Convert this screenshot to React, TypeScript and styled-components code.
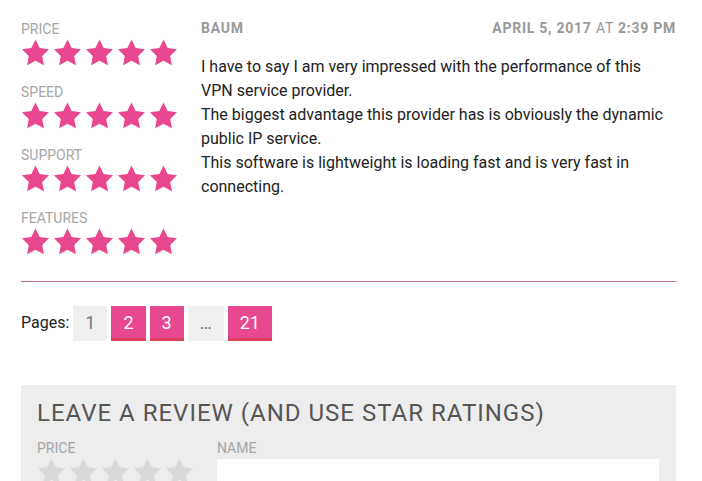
import React from "react";
import styled, { createGlobalStyle } from "styled-components";

const Global = createGlobalStyle`
  html, body { margin: 0; padding: 0; background: #fff; }
  body { font-family: Roboto, "Liberation Sans", Arial, sans-serif; color: #222; }
`;

const Page = styled.div`
  width: 655px;
  padding: 20px 0 0 21px;
`;

const Review = styled.div`
  display: flex;
`;

const RatingsCol = styled.div`
  width: 180px;
  flex: none;
  padding-top: 1px;
`;

const RatingBlock = styled.div`
  margin-bottom: 18px;
  &:last-child { margin-bottom: 0; }
`;

const Label = styled.div`
  font-size: 14px;
  line-height: 17px;
  color: #a6a6a6;
  text-transform: uppercase;
  margin-bottom: 1px;
`;

const Stars = styled.div`
  display: flex;
  gap: 5px;
  height: 27px;
  margin-left: 1px;
`;

const StarSvg = styled.svg<{ $color: string }>`
  width: 27px;
  height: 27px;
  display: block;
  fill: ${(p) => p.$color};
`;

const ContentCol = styled.div`
  flex: 1;
  min-width: 0;
`;

const Meta = styled.div`
  display: flex;
  justify-content: space-between;
  font-size: 14px;
  line-height: 17px;
  color: #999;
  text-transform: uppercase;
  letter-spacing: 0.75px;
`;

const Strong = styled.span`
  font-weight: 700;
`;

const Body = styled.div`
  margin-top: 18px;
  font-size: 16px;
  line-height: 24px;
  color: #222;
`;

const Rule = styled.hr`
  border: 0;
  height: 1px;
  background: #b8688d;
  margin: 26px 0 24px;
`;

const Pagination = styled.div`
  display: flex;
  align-items: center;
  gap: 4px;
  font-size: 16px;
`;

const PagesLabel = styled.span`
  color: #222;
  padding-bottom: 3px;
`;

const PageBox = styled.span<{ $active?: boolean }>`
  display: inline-flex;
  align-items: center;
  justify-content: center;
  height: 32px;
  padding: 0 12px;
  font-size: 18px;
  background: ${(p) => (p.$active ? "#e8488f" : "#efefef")};
  color: ${(p) => (p.$active ? "#fff" : "#777")};
  border-bottom: 3px solid ${(p) => (p.$active ? "#e0405c" : "#efefef")};
`;

const Form = styled.div`
  margin-top: 44px;
  background: #ededed;
  padding: 14px 17px 20px 16px;
`;

const FormTitle = styled.h2`
  margin: 0 0 13px;
  font-size: 24px;
  line-height: 28px;
  font-weight: 400;
  letter-spacing: 1px;
  color: #555;
  text-transform: uppercase;
`;

const FormRow = styled.div`
  display: flex;
`;

const FormRatings = styled.div`
  width: 180px;
  flex: none;
`;

const FormField = styled.div`
  flex: 1;
`;

const Input = styled.div`
  height: 40px;
  background: #fff;
  margin-top: 2px;
`;

const STAR = "M12 2l3.09 6.26L22 9.27l-5 4.87 1.18 6.88L12 17.77l-6.18 3.25L7 14.14 2 9.27l6.91-1.01L12 2z";

const StarRow = ({ color }: { color: string }) => (
  <Stars>
    {[0, 1, 2, 3, 4].map((i) => (
      <StarSvg key={i} $color={color} viewBox="2 1.6 20 20">
        <path d={STAR} />
      </StarSvg>
    ))}
  </Stars>
);

const categories = ["Price", "Speed", "Support", "Features"];

export default function App() {
  return (
    <>
      <Global />
      <Page>
        <Review>
          <RatingsCol>
            {categories.map((c) => (
              <RatingBlock key={c}>
                <Label>{c}</Label>
                <StarRow color="#e8488f" />
              </RatingBlock>
            ))}
          </RatingsCol>
          <ContentCol>
            <Meta>
              <Strong>Baum</Strong>
              <span>
                <Strong>April 5, 2017</Strong> at <Strong>2:39 pm</Strong>
              </span>
            </Meta>
            <Body>
              I have to say I am very impressed with the performance of this VPN service provider.
              <br />
              The biggest advantage this provider has is obviously the dynamic public IP service.
              <br />
              This software is lightweight is loading fast and is very fast in connecting.
            </Body>
          </ContentCol>
        </Review>
        <Rule />
        <Pagination>
          <PagesLabel>Pages:</PagesLabel>
          <PageBox>1</PageBox>
          <PageBox $active>2</PageBox>
          <PageBox $active>3</PageBox>
          <PageBox>…</PageBox>
          <PageBox $active>21</PageBox>
        </Pagination>
        <Form>
          <FormTitle>Leave a review (and use star ratings)</FormTitle>
          <FormRow>
            <FormRatings>
              <Label>Price</Label>
              <StarRow color="#d9d9d9" />
            </FormRatings>
            <FormField>
              <Label>Name</Label>
              <Input />
            </FormField>
          </FormRow>
        </Form>
      </Page>
    </>
  );
}
